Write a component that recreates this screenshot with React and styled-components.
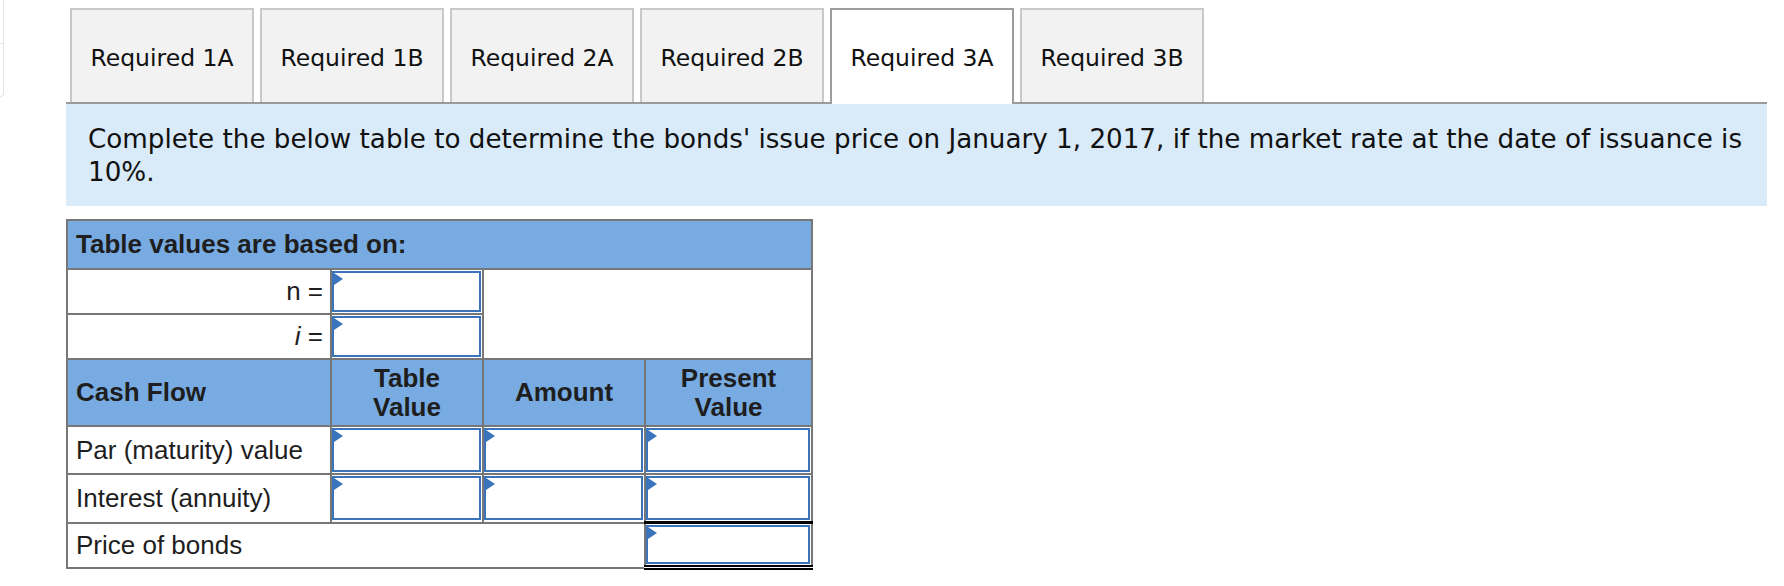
import React from 'react'
import styled, { createGlobalStyle } from 'styled-components'

const GlobalStyle = createGlobalStyle`
  body {
    margin: 0;
    background: #fff;
  }
`

const tabs = ['Required 1A', 'Required 1B', 'Required 2A', 'Required 2B', 'Required 3A', 'Required 3B']
const activeTab = 'Required 3A'

const App = () => (
  <Page>
    <GlobalStyle />
    <Stub>
      <StubTop />
    </Stub>
    <Main>
      <TabBar>
        {tabs.map(t => (
          <Tab key={t} $active={t === activeTab}>{t}</Tab>
        ))}
      </TabBar>
      <Prompt>
        Complete the below table to determine the bonds' issue price on January 1, 2017, if the market rate at the date of issuance is 10%.
      </Prompt>
      <Worksheet>
        <colgroup>
          <col style={{ width: 264 }} />
          <col style={{ width: 152 }} />
          <col style={{ width: 162 }} />
          <col style={{ width: 167 }} />
        </colgroup>
        <tbody>
          <tr>
            <HeadCell colSpan={4} $h={47}>Table values are based on:</HeadCell>
          </tr>
          <tr>
            <LabelCell $right>n =</LabelCell>
            <InputCell><Entry $h={41} /></InputCell>
            <BlankCell colSpan={2} rowSpan={2} />
          </tr>
          <tr>
            <LabelCell $right><i>i</i> =</LabelCell>
            <InputCell><Entry $h={41} /></InputCell>
          </tr>
          <tr>
            <HeadCell $h={65}>Cash Flow</HeadCell>
            <HeadCell $center>Table<br />Value</HeadCell>
            <HeadCell $center>Amount</HeadCell>
            <HeadCell $center>Present<br />Value</HeadCell>
          </tr>
          {['Par (maturity) value', 'Interest (annuity)'].map(label => (
            <tr key={label}>
              <LabelCell>{label}</LabelCell>
              <InputCell><Entry $h={44} /></InputCell>
              <InputCell><Entry $h={44} /></InputCell>
              <InputCell><Entry $h={44} /></InputCell>
            </tr>
          ))}
          <tr>
            <LabelCell colSpan={3}>Price of bonds</LabelCell>
            <TotalCell><Entry $h={39} /></TotalCell>
          </tr>
        </tbody>
      </Worksheet>
    </Main>
  </Page>
)

export default App

const Page = styled.div`
  display: flex;
  align-items: flex-start;
  min-height: 586px;
`

const Stub = styled.div`
  flex-shrink: 0;
  width: 3px;
  height: 96px;
  border-right: 1px solid #e6e6e6;
  border-bottom: 1px solid #e6e6e6;
  border-bottom-right-radius: 6px;
`

const StubTop = styled.div`
  height: 43px;
  border-bottom: 1px solid #e6e6e6;
`

const Main = styled.div`
  margin-left: 62px;
  width: 1701px;
  padding-top: 8px;
`

const TabBar = styled.div`
  display: flex;
  align-items: flex-end;
  gap: 6px;
  padding-left: 4px;
  border-bottom: 2px solid #9b9b9b;
`

const Tab = styled.div`
  box-sizing: border-box;
  width: 184px;
  height: ${p => (p.$active ? '96px' : '94px')};
  margin-bottom: ${p => (p.$active ? '-2px' : '0')};
  padding-top: ${p => (p.$active ? '1px' : '3px')};
  display: flex;
  align-items: center;
  justify-content: center;
  background: ${p => (p.$active ? '#fff' : '#f2f2f2')};
  border: 2px solid ${p => (p.$active ? '#9d9d9d' : '#c8c8c8')};
  border-bottom: none;
  font-family: 'DejaVu Sans', Verdana, sans-serif;
  font-size: 23.5px;
  color: #111;
`

const Prompt = styled.div`
  background: #d9eaf8;
  padding: 19px 10px 17px 22px;
  font-family: 'DejaVu Sans', Verdana, sans-serif;
  font-size: 26.2px;
  line-height: 33px;
  color: #111;
`

const Worksheet = styled.table`
  margin-top: 13px;
  width: 745px;
  table-layout: fixed;
  border-collapse: collapse;
  border: 2px solid #777;
  font-family: 'Liberation Sans', Arial, Helvetica, sans-serif;
  font-size: 26px;
  color: #1e1e1e;

  td {
    border: 2px solid #777;
  }
`

const HeadCell = styled.td`
  height: ${p => (p.$h ? `${p.$h}px` : 'auto')};
  padding: 0 8px;
  background: #78abe2;
  font-weight: bold;
  line-height: 29px;
  text-align: ${p => (p.$center ? 'center' : 'left')};
`

const LabelCell = styled.td`
  padding: 0 7px 0 8px;
  text-align: ${p => (p.$right ? 'right' : 'left')};
  background: #fff;

  i {
    font-style: italic;
  }
`

const BlankCell = styled.td`
  background: #fff;
`

const InputCell = styled.td`
  padding: 1px 1px 1px 0;
  vertical-align: middle;
`

const TotalCell = styled(InputCell)`
  && {
    border-top: 3px solid #000;
    border-bottom: 5px double #000;
  }
`

const Entry = styled.div`
  position: relative;
  box-sizing: border-box;
  height: ${p => p.$h}px;
  border: 2px solid #3a74bc;
  background: #fff;

  &::before {
    content: '';
    position: absolute;
    top: 0;
    left: 0;
    border-left: 9px solid #3a74bc;
    border-top: 6px solid transparent;
    border-bottom: 6px solid transparent;
  }
`
